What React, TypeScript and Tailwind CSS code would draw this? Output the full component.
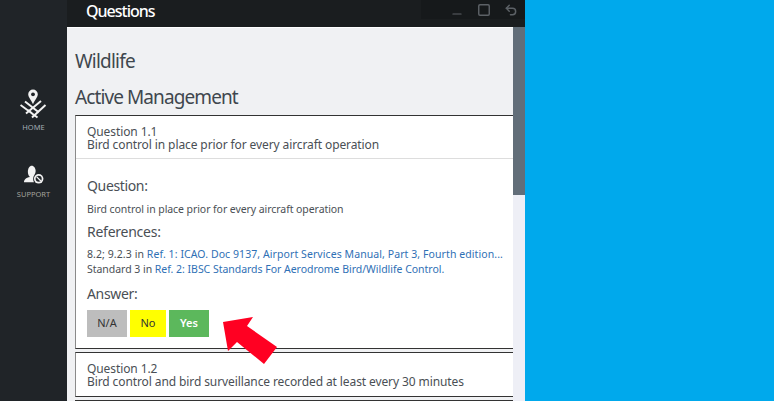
import { Minus, Square, Undo2 } from 'lucide-react';

const font = { fontFamily: '"Noto Sans", sans-serif' };

function HomeIcon() {
    return (
        <svg width="28" height="32" viewBox="0 0 28 32" fill="none" stroke="#f2f2f2">
            <path d="M13 1.500a4.800 4.800 0 0 0-4.800 4.800c0 3 3 5.500 4.800 10 1.800-4.500 4.800-7 4.800-10A4.800 4.800 0 0 0 13 1.500z" fill="#f2f2f2" stroke="none" />
            <circle cx="13" cy="6.300" r="1.900" fill="#202428" stroke="none" />
            <path d="M.5 17l17 12.500M5 13.500l14 11M25.500 17L12 29.500M21 13L6 25.500M8 22l7 6" strokeWidth="2" />
        </svg>
    );
}

function SupportIcon() {
    return (
        <svg width="21" height="19" viewBox="0 0 24 22">
            <path d="M1 20c0-3 2-5 7-6-2-2-2.500-4-2.500-6C5.500 4 7.500 1 10 1s4.500 3 4.500 6c0 1.500-.5 3-1.500 4.500-1.500 2-2 5-.5 8.500z" fill="#f2f2f2" />
            <circle cx="18" cy="16" r="5.500" fill="#f2f2f2" />
            <circle cx="18" cy="16" r="3.500" fill="#202428" />
            <path d="M15.500 13.500l5 5" stroke="#f2f2f2" strokeWidth="1.500" />
        </svg>
    );
}

export default function App() {
    return (
        <div className="flex h-[401px] w-[774px] overflow-hidden bg-[#00a9ec]" style={font}>
            {/* left nav */}
            <div className="flex w-[67px] flex-col items-center bg-[#202428] pt-[88px]">
                <HomeIcon />
                <div className="mt-[2px] text-[7.5px] leading-[10px] text-[#a3acb3]">HOME</div>
                <div className="mt-[33px]"><SupportIcon /></div>
                <div className="mt-[5px] text-[7.5px] leading-[10px] text-[#a3a39c]">SUPPORT</div>
            </div>

            <div className="flex w-[458px] flex-col">
                {/* title bar */}
                <div className="flex h-[27px] items-start justify-between bg-[#1a1d1f]">
                    <div className="pl-[19px] text-[16px] leading-[23px] font-medium tracking-[-1px] text-white">Questions</div>
                    <div className="flex h-[19px] w-[104px] items-center justify-end gap-[13px] bg-[#16191b] pr-[7px] text-[#5c6166]">
                        <Minus size={14} strokeWidth={2} className="mt-[8px]" />
                        <Square size={14} strokeWidth={2.500} />
                        <Undo2 size={14} strokeWidth={2.500} />
                    </div>
                </div>

                <div className="flex min-h-0 flex-1">
                    <div className="min-w-0 flex-1 overflow-hidden border-t border-white bg-[#f0f1f3] pl-2 text-[#4a4f55]">
                        <h1 className="mt-[20px] text-[19px] leading-[26px] tracking-[-0.8px] text-[#3f474e]">Wildlife</h1>
                        <h2 className="mt-[10px] text-[19px] leading-[26px] tracking-[-0.9px] text-[#3f474e]">Active Management</h2>

                        {/* question 1.1 */}
                        <div className="mt-[5px] h-[234px] border border-r-0 border-[#8a8a8a] border-t-[#333] border-b-[#333] bg-white">
                            <div className="h-[43px] border-b border-[#ddd] px-[11px] pt-[9px] text-[12px] leading-[13px] tracking-[-0.1px]">
                                <div>Question 1.1</div>
                                <div>Bird control in place prior for every aircraft operation</div>
                            </div>
                            <div className="px-[11px]">
                                <div className="mt-[18px] text-[14px] leading-[18px] tracking-[-0.35px]">Question:</div>
                                <div className="mt-[7px] text-[10.5px] leading-[14px] tracking-[-0.07px]">Bird control in place prior for every aircraft operation</div>
                                <div className="mt-[7px] text-[14px] leading-[18px] tracking-[-0.25px]">References:</div>
                                <div className="mt-[6px] text-[10.5px] leading-[15px] whitespace-nowrap">
                                    <div className="tracking-[0.08px]">8.2; 9.2.3 in <span className="text-[#2f70b5]">Ref. 1: ICAO. Doc 9137, Airport Services Manual, Part 3, Fourth edition...</span></div>
                                    <div className="tracking-[-0.03px]">Standard 3 in <span className="text-[#2f70b5]">Ref. 2: IBSC Standards For Aerodrome Bird/Wildlife Control.</span></div>
                                </div>
                                <div className="mt-[8px] text-[14px] leading-[18px] tracking-[-0.35px]">Answer:</div>
                                <div className="mt-[7px] flex gap-[3px] text-[11px]">
                                    <div className="flex h-[27px] w-[40px] items-center justify-center bg-[#bdbdbd] text-[#333]">N/A</div>
                                    <div className="flex h-[27px] w-[36px] items-center justify-center bg-[#ffff00] text-[#333]">No</div>
                                    <div className="flex h-[27px] w-[40px] items-center justify-center bg-[#5cb85c] font-semibold text-white">Yes</div>
                                </div>
                            </div>
                        </div>

                        {/* question 1.2 */}
                        <div className="mt-[3px] h-[45px] border border-r-0 border-[#8a8a8a] border-t-[#333] border-b-[#333] bg-white px-[11px] pt-[9px] text-[12px] leading-[13px] tracking-[-0.1px]">
                            <div>Question 1.2</div>
                            <div>Bird control and bird surveillance recorded at least every 30 minutes</div>
                        </div>
                        <div className="mt-[3px] h-[10px] border-t border-[#333] bg-white" />
                    </div>

                    {/* scrollbar */}
                    <div className="w-[12px] bg-[#eeeff6]">
                        <div className="h-[168px] bg-[#626e79]" />
                    </div>
                </div>
            </div>

            <svg className="absolute top-0 left-0" width="774" height="401" fill="#ff0022">
                <polygon points="223,322 253,317 247,326 277,347 264,364 237,342 228,351" />
            </svg>
        </div>
    );
}
